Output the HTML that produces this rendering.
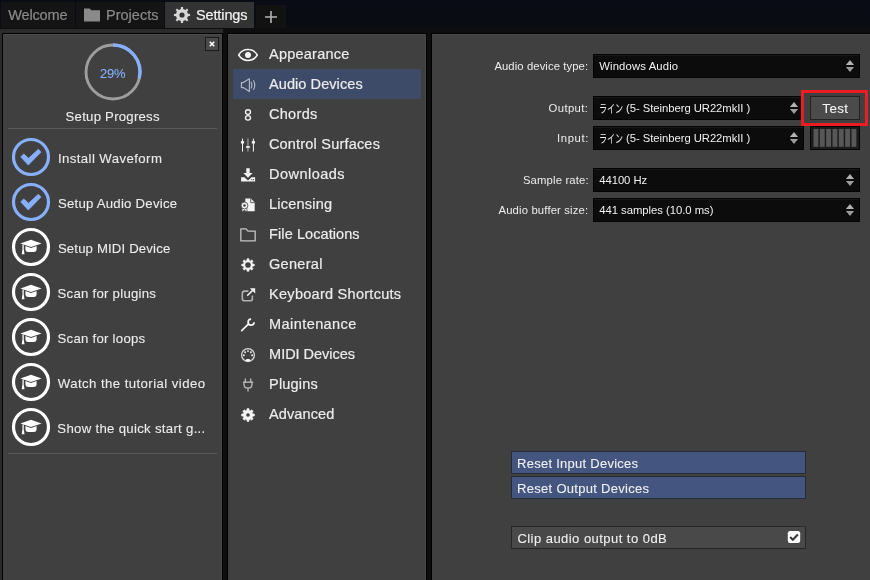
<!DOCTYPE html>
<html><head><meta charset="utf-8"><title>Settings</title>
<style>
html,body{margin:0;padding:0}
body{width:870px;height:580px;overflow:hidden;position:relative;background:#0e0e0e;font-family:"Liberation Sans","Noto Sans CJK JP",sans-serif;color:#e8e8e8}
#root{position:absolute;left:0;top:0;width:870px;height:580px;will-change:transform;-webkit-text-stroke:0.2px}
.abs{position:absolute}
.t{position:absolute;white-space:nowrap;line-height:1}
#topbar{left:0;top:0;width:870px;height:29px;background:linear-gradient(#0a0c15 0,#0a0c14 24px,#0d0d0f 29px)}
.tab{position:absolute;top:2px;height:26px;background:#141414}
.tab.act{background:#333}
#leftbg{left:0;top:29px;width:223px;height:551px;background:#2b2b2b}
.panel{position:absolute;background:#404040;border:1px solid #000;border-bottom:none;box-shadow:inset 0 1px 0 #4c4c4c,inset -1px 0 0 #474747}
.mi{position:absolute;left:233px;width:188px;height:30px}
.mi.sel{background:#3d4a68}
.combo{position:absolute;height:22px;background:#0c0c0c;border:1px solid #030303;box-shadow:inset 0 1px 0 #191919;font-size:11.5px;line-height:22px;color:#f0f0f0;white-space:nowrap}
.btn{position:absolute;left:511px;width:293px;height:21px;border:1px solid #262b38;background:#44567f;font-size:13.4px;line-height:21px;color:#f0f0f0}
</style></head><body><div id="root">
<div class="abs" id="topbar"></div>
<div class="abs" id="leftbg"></div>
<div class="tab" style="left:1px;width:74px"></div>
<div class="tab" style="left:76px;width:88px"></div>
<div class="tab act" style="left:165px;width:89px"></div>
<div class="tab" style="left:256px;width:30px;top:5px;height:23px;background:#121212"></div>
<div class="panel" style="left:2px;top:33px;width:219px;height:547px"></div>
<div class="panel" style="left:227px;top:33px;width:198px;height:547px"></div>
<div class="panel" style="left:431px;top:33px;width:440px;height:547px"></div>
<div class="abs" style="left:205px;top:37px;width:12px;height:12px;border:1px solid #1a1a1a;background:#4a4a4a"></div>
<div class="abs" style="left:8px;top:128px;width:209px;height:1px;background:#5a5a5a"></div>
<div class="abs" style="left:8px;top:453px;width:209px;height:1px;background:#5a5a5a"></div>
<div class="mi" style="top:39px"></div>
<div class="mi sel" style="top:69px"></div>
<div class="mi" style="top:99px"></div>
<div class="mi" style="top:129px"></div>
<div class="mi" style="top:159px"></div>
<div class="mi" style="top:189px"></div>
<div class="mi" style="top:219px"></div>
<div class="mi" style="top:249px"></div>
<div class="mi" style="top:279px"></div>
<div class="mi" style="top:309px"></div>
<div class="mi" style="top:339px"></div>
<div class="mi" style="top:369px"></div>
<div class="mi" style="top:399px"></div>
<div class="combo" style="left:593px;top:54px;width:265px"></div>
<div class="combo" style="left:593px;top:96px;width:208.5px"></div>
<div class="combo" style="left:593px;top:126px;width:208.5px"></div>
<div class="combo" style="left:593px;top:168px;width:265px"></div>
<div class="combo" style="left:593px;top:198px;width:265px"></div>
<div class="abs" style="left:810px;top:96px;width:48px;height:22px;border:1px solid #222;background:#4b4b4b"></div>
<div class="abs" style="left:801px;top:90px;width:61.4px;height:29.6px;border:3px solid #ed1c24"></div>
<div class="abs" style="left:810px;top:126px;width:48px;height:22px;border:1px solid #050505;background:#1b1b1b"></div>
<div class="btn" style="top:451px"></div>
<div class="btn" style="top:476px"></div>
<div class="btn" style="top:526px;background:#494949;border-color:#262626"></div>
<svg class="abs" style="left:80px;top:3px" width="24" height="24" viewBox="-12 -12 24 24"><path d="M-8 -6.5 h5.5 l1.8 1.8 h8.7 v11.2 h-16z" fill="#8a8a8a"/></svg>
<svg class="abs" style="left:170px;top:2.9px" width="24" height="24" viewBox="-12 -12 24 24"><path fill-rule="evenodd" fill="#d6d6d6" d="M-1.19 -5.98 L-1.02 -8.04 L1.02 -8.04 L1.19 -5.98 L3.39 -5.07 L4.96 -6.40 L6.40 -4.96 L5.07 -3.39 L5.98 -1.19 L8.04 -1.02 L8.04 1.02 L5.98 1.19 L5.07 3.39 L6.40 4.96 L4.96 6.40 L3.39 5.07 L1.19 5.98 L1.02 8.04 L-1.02 8.04 L-1.19 5.98 L-3.39 5.07 L-4.96 6.40 L-6.40 4.96 L-5.07 3.39 L-5.98 1.19 L-8.04 1.02 L-8.04 -1.02 L-5.98 -1.19 L-5.07 -3.39 L-6.40 -4.96 L-4.96 -6.40 L-3.39 -5.07Z M-2.60 0.00 a2.60 2.60 0 1 0 5.20 0 a2.60 2.60 0 1 0 -5.20 0Z"/></svg>
<svg class="abs" style="left:259px;top:4.7px" width="24" height="24" viewBox="-12 -12 24 24"><path d="M-6 0H6M0 -6V6" stroke="#b4b4b4" stroke-width="1.6" fill="none"/></svg>
<svg class="abs" style="left:200px;top:32px" width="24" height="24" viewBox="-12 -12 24 24"><path d="M-2.2 -2.2L2.2 2.2M2.2 -2.2L-2.2 2.2" stroke="#fff" stroke-width="1.6" fill="none"/></svg>
<svg class="abs" style="left:80.5px;top:40px" width="64" height="64" viewBox="-32 -32 64 64"><circle cx="0" cy="0" r="27" stroke="#9e9e9e" stroke-width="2.9" fill="none"/><path d="M0.00 -27.00 A27 27 0 0 1 26.25 6.30" stroke="#86affc" stroke-width="3.4" fill="none"/></svg>
<svg class="abs" style="left:8.7px;top:135.4px" width="44" height="44" viewBox="-22 -22 44 44"><circle cx="0" cy="0" r="17.5" stroke="#86affc" stroke-width="3.2" fill="none"/><path d="M-10.2 -0.1 L-7.3 -3.1 L-2.4 1.3 L7.3 -7.7 L10 -4.9 L-2.7 8Z" fill="#86affc" stroke="#86affc" stroke-width="0.8" stroke-linejoin="round"/></svg>
<svg class="abs" style="left:8.7px;top:180.4px" width="44" height="44" viewBox="-22 -22 44 44"><circle cx="0" cy="0" r="17.5" stroke="#86affc" stroke-width="3.2" fill="none"/><path d="M-10.2 -0.1 L-7.3 -3.1 L-2.4 1.3 L7.3 -7.7 L10 -4.9 L-2.7 8Z" fill="#86affc" stroke="#86affc" stroke-width="0.8" stroke-linejoin="round"/></svg>
<svg class="abs" style="left:8.7px;top:225.4px" width="44" height="44" viewBox="-22 -22 44 44"><circle cx="0" cy="0" r="17.5" stroke="#fff" stroke-width="3.2" fill="none"/><path d="M0 -7.2 L10.6 -3.5 L0 -0.1 L-10.6 -3.5Z" fill="#fff"/><path d="M-5.6 -0.9 L0 0.9 L5.6 -0.9 V2.8 Q5.4 5 2.6 5 H-2.6 Q-5.4 5 -5.6 2.8Z" fill="#fff"/><path d="M-7.9 -2.4 V4.4" stroke="#fff" stroke-width="1.3"/><path d="M-8.8 3.6 h1.8 l0.5 3.7 h-2.8z" fill="#fff"/></svg>
<svg class="abs" style="left:8.7px;top:270.4px" width="44" height="44" viewBox="-22 -22 44 44"><circle cx="0" cy="0" r="17.5" stroke="#fff" stroke-width="3.2" fill="none"/><path d="M0 -7.2 L10.6 -3.5 L0 -0.1 L-10.6 -3.5Z" fill="#fff"/><path d="M-5.6 -0.9 L0 0.9 L5.6 -0.9 V2.8 Q5.4 5 2.6 5 H-2.6 Q-5.4 5 -5.6 2.8Z" fill="#fff"/><path d="M-7.9 -2.4 V4.4" stroke="#fff" stroke-width="1.3"/><path d="M-8.8 3.6 h1.8 l0.5 3.7 h-2.8z" fill="#fff"/></svg>
<svg class="abs" style="left:8.7px;top:315.4px" width="44" height="44" viewBox="-22 -22 44 44"><circle cx="0" cy="0" r="17.5" stroke="#fff" stroke-width="3.2" fill="none"/><path d="M0 -7.2 L10.6 -3.5 L0 -0.1 L-10.6 -3.5Z" fill="#fff"/><path d="M-5.6 -0.9 L0 0.9 L5.6 -0.9 V2.8 Q5.4 5 2.6 5 H-2.6 Q-5.4 5 -5.6 2.8Z" fill="#fff"/><path d="M-7.9 -2.4 V4.4" stroke="#fff" stroke-width="1.3"/><path d="M-8.8 3.6 h1.8 l0.5 3.7 h-2.8z" fill="#fff"/></svg>
<svg class="abs" style="left:8.7px;top:360.4px" width="44" height="44" viewBox="-22 -22 44 44"><circle cx="0" cy="0" r="17.5" stroke="#fff" stroke-width="3.2" fill="none"/><path d="M0 -7.2 L10.6 -3.5 L0 -0.1 L-10.6 -3.5Z" fill="#fff"/><path d="M-5.6 -0.9 L0 0.9 L5.6 -0.9 V2.8 Q5.4 5 2.6 5 H-2.6 Q-5.4 5 -5.6 2.8Z" fill="#fff"/><path d="M-7.9 -2.4 V4.4" stroke="#fff" stroke-width="1.3"/><path d="M-8.8 3.6 h1.8 l0.5 3.7 h-2.8z" fill="#fff"/></svg>
<svg class="abs" style="left:8.7px;top:405.4px" width="44" height="44" viewBox="-22 -22 44 44"><circle cx="0" cy="0" r="17.5" stroke="#fff" stroke-width="3.2" fill="none"/><path d="M0 -7.2 L10.6 -3.5 L0 -0.1 L-10.6 -3.5Z" fill="#fff"/><path d="M-5.6 -0.9 L0 0.9 L5.6 -0.9 V2.8 Q5.4 5 2.6 5 H-2.6 Q-5.4 5 -5.6 2.8Z" fill="#fff"/><path d="M-7.9 -2.4 V4.4" stroke="#fff" stroke-width="1.3"/><path d="M-8.8 3.6 h1.8 l0.5 3.7 h-2.8z" fill="#fff"/></svg>
<svg class="abs" style="left:236px;top:42.6px" width="24" height="24" viewBox="-12 -12 24 24"><path d="M-9.3 0 C-5 -7.2 5 -7.2 9.3 0 C5 7.2 -5 7.2 -9.3 0Z" stroke="#f4f4f4" stroke-width="1.5" fill="none"/><circle cx="0" cy="0" r="3" fill="#f4f4f4"/></svg>
<svg class="abs" style="left:236px;top:73px" width="24" height="24" viewBox="-12 -12 24 24"><path d="M-6.6 -2.4 h1.8 l6.2 -3.8 v12.6 l-6.2 -3.8 h-1.8z" stroke="#b4b8c4" stroke-width="1.15" fill="none" stroke-linejoin="round"/><path d="M3.2 -2.7 Q4.4 0.1 3.2 2.9M5.6 -4.3 Q8 0.1 5.6 4.5" stroke="#b4b8c4" stroke-width="1.15" fill="none" stroke-linecap="round"/></svg>
<svg class="abs" style="left:235.9px;top:103.3px" width="24" height="24" viewBox="-12 -12 24 24"><ellipse cx="0" cy="-2.95" rx="2.5" ry="2.3" stroke="#f4f4f4" stroke-width="1.35" fill="none"/><ellipse cx="0" cy="2.85" rx="2.5" ry="2.3" stroke="#f4f4f4" stroke-width="1.35" fill="none"/></svg>
<svg class="abs" style="left:236px;top:133px" width="24" height="24" viewBox="-12 -12 24 24"><path d="M-5.5 -6.4V6.6M5.4 -6.4V6.6" stroke="#f4f4f4" stroke-width="1" fill="none"/><path d="M-0.05 -6.4V6.6" stroke="#a8a8a8" stroke-width="1.1" fill="none"/><rect x="-7.1" y="-3.9" width="3.2" height="2.4" fill="#f4f4f4"/><rect x="-1.9" y="1.0" width="3.7" height="2" fill="#e0e0e0"/><rect x="3.8" y="-3.9" width="3.2" height="2.4" fill="#f4f4f4"/></svg>
<svg class="abs" style="left:236px;top:163px" width="24" height="24" viewBox="-12 -12 24 24"><path d="M-1.7 -6.7 h3.4 v4.7 h2.9 l-4.6 4.7 l-4.6 -4.7 h2.9z" fill="#f4f4f4"/><path d="M-6.9 2.3 h3.3 l3.6 3.3 l3.6 -3.3 h3.5 v4.1 h-14z" fill="#f4f4f4"/><rect x="3.3" y="4.2" width="1" height="1" fill="#404040"/><rect x="5" y="4.2" width="1" height="1" fill="#404040"/></svg>
<svg class="abs" style="left:236px;top:193px" width="24" height="24" viewBox="-12 -12 24 24"><path d="M-2.7 -6.4 h5.6 l3.8 3.8 v8.8 h-9.4z" fill="#f4f4f4"/><path d="M2.7 -6.4 v4 h4" stroke="#404040" stroke-width="0.8" fill="none"/><path d="M-5.8 2.6 L-6.1 6.9 L-3.5 5.3 L-0.9 6.9 L-1.2 2.6Z" fill="#f4f4f4" stroke="#404040" stroke-width="0.7"/><circle cx="-3.5" cy="0.5" r="3.4" fill="#f4f4f4" stroke="#404040" stroke-width="0.8"/><circle cx="-3.5" cy="0.5" r="1.3" fill="#404040"/></svg>
<svg class="abs" style="left:236px;top:223.2px" width="24" height="24" viewBox="-12 -12 24 24"><path d="M-7.2 -6.2 h5 l2.2 2.3 h7.2 v9.7 h-14.4z" stroke="#c4c4c4" stroke-width="1.3" fill="none" stroke-linejoin="round"/></svg>
<svg class="abs" style="left:236px;top:253.2px" width="24" height="24" viewBox="-12 -12 24 24"><path fill-rule="evenodd" fill="#f4f4f4" stroke="#f4f4f4" stroke-width="0.5" stroke-linejoin="round" d="M-1.12 -4.67 L-1.00 -6.32 L1.00 -6.32 L1.12 -4.67 L2.51 -4.09 L3.76 -5.18 L5.18 -3.76 L4.09 -2.51 L4.67 -1.12 L6.32 -1.00 L6.32 1.00 L4.67 1.12 L4.09 2.51 L5.18 3.76 L3.76 5.18 L2.51 4.09 L1.12 4.67 L1.00 6.32 L-1.00 6.32 L-1.12 4.67 L-2.51 4.09 L-3.76 5.18 L-5.18 3.76 L-4.09 2.51 L-4.67 1.12 L-6.32 1.00 L-6.32 -1.00 L-4.67 -1.12 L-4.09 -2.51 L-5.18 -3.76 L-3.76 -5.18 L-2.51 -4.09Z M-3.10 0.00 a3.10 3.10 0 1 0 6.20 0 a3.10 3.10 0 1 0 -6.20 0Z"/></svg>
<svg class="abs" style="left:236px;top:283px" width="24" height="24" viewBox="-12 -12 24 24"><path d="M0.4 -3.9 h-3.7 q-2.4 0 -2.4 2.4 v4.9 q0 2.4 2.4 2.4 h5.3 q2.4 0 2.4 -2.4 v-3" stroke="#b0b0b0" stroke-width="1.6" fill="none"/><path d="M-0.8 0.8 L4.6 -4.6" stroke="#f4f4f4" stroke-width="1.5" fill="none"/><path d="M1.9 -6.8 h5.3 v5.3z" fill="#f4f4f4"/></svg>
<svg class="abs" style="left:236px;top:313px" width="24" height="24" viewBox="-12 -12 24 24"><path d="M-6.3 5.6 L0.6 -1.1" stroke="#f4f4f4" stroke-width="1.7" stroke-linecap="round" fill="none"/><path d="M3.1 -5.8 A3.0 3.0 0 1 0 6.1 -2.7" stroke="#f4f4f4" stroke-width="1.7" fill="none"/></svg>
<svg class="abs" style="left:236.1px;top:343px" width="24" height="24" viewBox="-12 -12 24 24"><circle cx="0" cy="0" r="6.4" stroke="#dadada" stroke-width="1.3" fill="none"/><circle cx="-4.10" cy="0.20" r="0.95" fill="#f4f4f4"/><circle cx="-2.90" cy="-2.70" r="0.95" fill="#f4f4f4"/><circle cx="0.00" cy="-3.90" r="0.95" fill="#f4f4f4"/><circle cx="2.90" cy="-2.70" r="0.95" fill="#f4f4f4"/><circle cx="4.10" cy="0.20" r="0.95" fill="#f4f4f4"/><path d="M-1.7 4 h3.4 l0.6 2.5 h-4.6z" fill="#f4f4f4"/></svg>
<svg class="abs" style="left:236px;top:372.6px" width="24" height="24" viewBox="-12 -12 24 24"><path d="M-2.7 -6.4 v3.6 M2.7 -6.4 v3.6" stroke="#c4c4c4" stroke-width="1.2" fill="none"/><path d="M-5 -2.8 h10.2 M-4 -2.8 v2.2 q0 3.6 4 3.6 q4 0 4 -3.6 v-2.2 M0 3 v3.6" stroke="#c4c4c4" stroke-width="1.2" fill="none"/></svg>
<svg class="abs" style="left:236px;top:402.9px" width="24" height="24" viewBox="-12 -12 24 24"><path fill-rule="evenodd" fill="#f4f4f4" stroke="#f4f4f4" stroke-width="0.5" stroke-linejoin="round" d="M-1.18 -4.76 L-1.02 -6.42 L1.02 -6.42 L1.18 -4.76 L2.53 -4.20 L3.82 -5.26 L5.26 -3.82 L4.20 -2.53 L4.76 -1.18 L6.42 -1.02 L6.42 1.02 L4.76 1.18 L4.20 2.53 L5.26 3.82 L3.82 5.26 L2.53 4.20 L1.18 4.76 L1.02 6.42 L-1.02 6.42 L-1.18 4.76 L-2.53 4.20 L-3.82 5.26 L-5.26 3.82 L-4.20 2.53 L-4.76 1.18 L-6.42 1.02 L-6.42 -1.02 L-4.76 -1.18 L-4.20 -2.53 L-5.26 -3.82 L-3.82 -5.26 L-2.53 -4.20Z M-2.10 0.00 a2.10 2.10 0 1 0 4.20 0 a2.10 2.10 0 1 0 -4.20 0Z"/></svg>
<svg class="abs" style="left:842px;top:58px" width="16" height="16" viewBox="-8 -8 16 16"><path d="M-4.1 -1 L0 -6 L4.1 -1Z" fill="#b2b2b2"/><path d="M-4.1 1.1 L0 5.9 L4.1 1.1Z" fill="#9c9c9c"/></svg>
<svg class="abs" style="left:786.1px;top:100px" width="16" height="16" viewBox="-8 -8 16 16"><path d="M-4.1 -1 L0 -6 L4.1 -1Z" fill="#b2b2b2"/><path d="M-4.1 1.1 L0 5.9 L4.1 1.1Z" fill="#9c9c9c"/></svg>
<svg class="abs" style="left:786.1px;top:130px" width="16" height="16" viewBox="-8 -8 16 16"><path d="M-4.1 -1 L0 -6 L4.1 -1Z" fill="#b2b2b2"/><path d="M-4.1 1.1 L0 5.9 L4.1 1.1Z" fill="#9c9c9c"/></svg>
<svg class="abs" style="left:842px;top:172px" width="16" height="16" viewBox="-8 -8 16 16"><path d="M-4.1 -1 L0 -6 L4.1 -1Z" fill="#b2b2b2"/><path d="M-4.1 1.1 L0 5.9 L4.1 1.1Z" fill="#9c9c9c"/></svg>
<svg class="abs" style="left:842px;top:202px" width="16" height="16" viewBox="-8 -8 16 16"><path d="M-4.1 -1 L0 -6 L4.1 -1Z" fill="#b2b2b2"/><path d="M-4.1 1.1 L0 5.9 L4.1 1.1Z" fill="#9c9c9c"/></svg>
<svg class="abs" style="left:0;top:0" width="870" height="580" viewBox="0 0 870 580" pointer-events="none"><rect x="813.5" y="129" width="4.9" height="17.8" fill="#575757"/><rect x="819.83" y="129" width="4.9" height="17.8" fill="#575757"/><rect x="826.16" y="129" width="4.9" height="17.8" fill="#575757"/><rect x="832.49" y="129" width="4.9" height="17.8" fill="#575757"/><rect x="838.82" y="129" width="4.9" height="17.8" fill="#575757"/><rect x="845.15" y="129" width="4.9" height="17.8" fill="#575757"/><rect x="851.48" y="129" width="4.9" height="17.8" fill="#575757"/></svg>
<svg class="abs" style="left:786px;top:528.9px" width="16" height="16" viewBox="-8 -8 16 16"><rect x="-6.2" y="-6.1" width="12.4" height="12.2" rx="2.4" fill="#fff"/><path d="M-3.9 0.1 L-1.2 2.7 L3.9 -2.6" stroke="#3a3a3a" stroke-width="2.1" fill="none"/></svg>
<span class="t" style="left:8.2px;top:8.2px;font-size:14.5px;letter-spacing:-0.14px;color:#8a8a8a">Welcome</span>
<span class="t" style="left:106px;top:8.2px;font-size:14.5px;letter-spacing:0.02px;color:#8a8a8a">Projects</span>
<span class="t" style="left:195.9px;top:8.2px;font-size:14.5px;letter-spacing:-0.1px;color:#f2f2f2">Settings</span>
<span class="t" style="left:65.6px;top:110.3px;font-size:13.2px;letter-spacing:0.23px;color:#ececec;-webkit-text-stroke:0.1px">Setup Progress</span>
<span class="t" style="left:99.9px;top:67.1px;font-size:13px;letter-spacing:-0.16px;color:#86affc;-webkit-text-stroke:0.1px">29%</span>
<span class="t" style="left:57.9px;top:152px;font-size:13.2px;letter-spacing:0.42px;color:#ececec;-webkit-text-stroke:0.1px">Install Waveform</span>
<span class="t" style="left:57.9px;top:197px;font-size:13.2px;letter-spacing:0.24px;color:#ececec;-webkit-text-stroke:0.1px">Setup Audio Device</span>
<span class="t" style="left:57.9px;top:242px;font-size:13.2px;letter-spacing:0.15px;color:#ececec;-webkit-text-stroke:0.1px">Setup MIDI Device</span>
<span class="t" style="left:57.5px;top:287px;font-size:13.2px;letter-spacing:0.26px;color:#ececec;-webkit-text-stroke:0.1px">Scan for plugins</span>
<span class="t" style="left:57.5px;top:332px;font-size:13.2px;letter-spacing:0.26px;color:#ececec;-webkit-text-stroke:0.1px">Scan for loops</span>
<span class="t" style="left:57.8px;top:377px;font-size:13.2px;letter-spacing:0.43px;color:#ececec;-webkit-text-stroke:0.1px">Watch the tutorial video</span>
<span class="t" style="left:57.3px;top:422px;font-size:13.2px;letter-spacing:0.3px;color:#ececec;-webkit-text-stroke:0.1px">Show the quick start g...</span>
<span class="t" style="left:269px;top:47px;font-size:14.5px;letter-spacing:0.23px;color:#ececec">Appearance</span>
<span class="t" style="left:269px;top:77px;font-size:14.5px;letter-spacing:0.08px;color:#ececec">Audio Devices</span>
<span class="t" style="left:268.9px;top:107px;font-size:14.5px;letter-spacing:0.33px;color:#ececec">Chords</span>
<span class="t" style="left:268.9px;top:137px;font-size:14.5px;letter-spacing:0.2px;color:#ececec">Control Surfaces</span>
<span class="t" style="left:269.1px;top:167px;font-size:14.5px;letter-spacing:0.45px;color:#ececec">Downloads</span>
<span class="t" style="left:269.1px;top:197px;font-size:14.5px;letter-spacing:0.2px;color:#ececec">Licensing</span>
<span class="t" style="left:269.1px;top:227px;font-size:14.5px;letter-spacing:0.08px;color:#ececec">File Locations</span>
<span class="t" style="left:268.9px;top:257px;font-size:14.5px;letter-spacing:0.33px;color:#ececec">General</span>
<span class="t" style="left:269.1px;top:287px;font-size:14.5px;letter-spacing:0.27px;color:#ececec">Keyboard Shortcuts</span>
<span class="t" style="left:269.1px;top:317px;font-size:14.5px;letter-spacing:0.42px;color:#ececec">Maintenance</span>
<span class="t" style="left:269.1px;top:347px;font-size:14.5px;letter-spacing:-0.03px;color:#ececec">MIDI Devices</span>
<span class="t" style="left:269.1px;top:377px;font-size:14.5px;letter-spacing:0.19px;color:#ececec">Plugins</span>
<span class="t" style="left:269px;top:407px;font-size:14.5px;letter-spacing:0.12px;color:#ececec">Advanced</span>
<span class="t" style="left:494.4px;top:61px;font-size:11.3px;letter-spacing:0.08px;color:#ececec;-webkit-text-stroke:0">Audio device type:</span>
<span class="t" style="left:548.6px;top:103px;font-size:11.3px;letter-spacing:0.38px;color:#ececec;-webkit-text-stroke:0">Output:</span>
<span class="t" style="left:557.1px;top:133px;font-size:11.3px;letter-spacing:0.6px;color:#ececec;-webkit-text-stroke:0">Input:</span>
<span class="t" style="left:522.9px;top:175px;font-size:11.3px;letter-spacing:0.15px;color:#ececec;-webkit-text-stroke:0">Sample rate:</span>
<span class="t" style="left:498.5px;top:205px;font-size:11.3px;letter-spacing:0.15px;color:#ececec;-webkit-text-stroke:0">Audio buffer size:</span>
<span class="t" style="left:599.2px;top:61px;font-size:11.3px;letter-spacing:0.14px;color:#f0f0f0;-webkit-text-stroke:0">Windows Audio</span>
<span class="t" style="left:598.6px;top:102.6px;font-size:11.6px;color:#f0f0f0;-webkit-text-stroke:0;transform:scaleX(0.69);transform-origin:0 0">ライン </span>
<span class="t" style="left:626.1px;top:103px;font-size:11.3px;letter-spacing:-0.06px;color:#f0f0f0;-webkit-text-stroke:0">(5- Steinberg UR22mkII )</span>
<span class="t" style="left:598.6px;top:132.6px;font-size:11.6px;color:#f0f0f0;-webkit-text-stroke:0;transform:scaleX(0.69);transform-origin:0 0">ライン </span>
<span class="t" style="left:626.1px;top:133px;font-size:11.3px;letter-spacing:-0.06px;color:#f0f0f0;-webkit-text-stroke:0">(5- Steinberg UR22mkII )</span>
<span class="t" style="left:599.2px;top:175px;font-size:11.3px;letter-spacing:-0.05px;color:#f0f0f0;-webkit-text-stroke:0">44100 Hz</span>
<span class="t" style="left:599.2px;top:205px;font-size:11.3px;letter-spacing:-0.03px;color:#f0f0f0;-webkit-text-stroke:0">441 samples (10.0 ms)</span>
<span class="t" style="left:822.3px;top:102.1px;font-size:13.4px;letter-spacing:0.39px;color:#f2f2f2;-webkit-text-stroke:0.1px">Test</span>
<span class="t" style="left:517.1px;top:457.2px;font-size:13px;letter-spacing:0.26px;color:#f0f0f0;-webkit-text-stroke:0.1px">Reset Input Devices</span>
<span class="t" style="left:517.1px;top:482.2px;font-size:13px;letter-spacing:0.29px;color:#f0f0f0;-webkit-text-stroke:0.1px">Reset Output Devices</span>
<span class="t" style="left:517.4px;top:532px;font-size:13px;letter-spacing:0.46px;color:#f0f0f0;-webkit-text-stroke:0.1px">Clip audio output to 0dB</span>
</div></body></html>
